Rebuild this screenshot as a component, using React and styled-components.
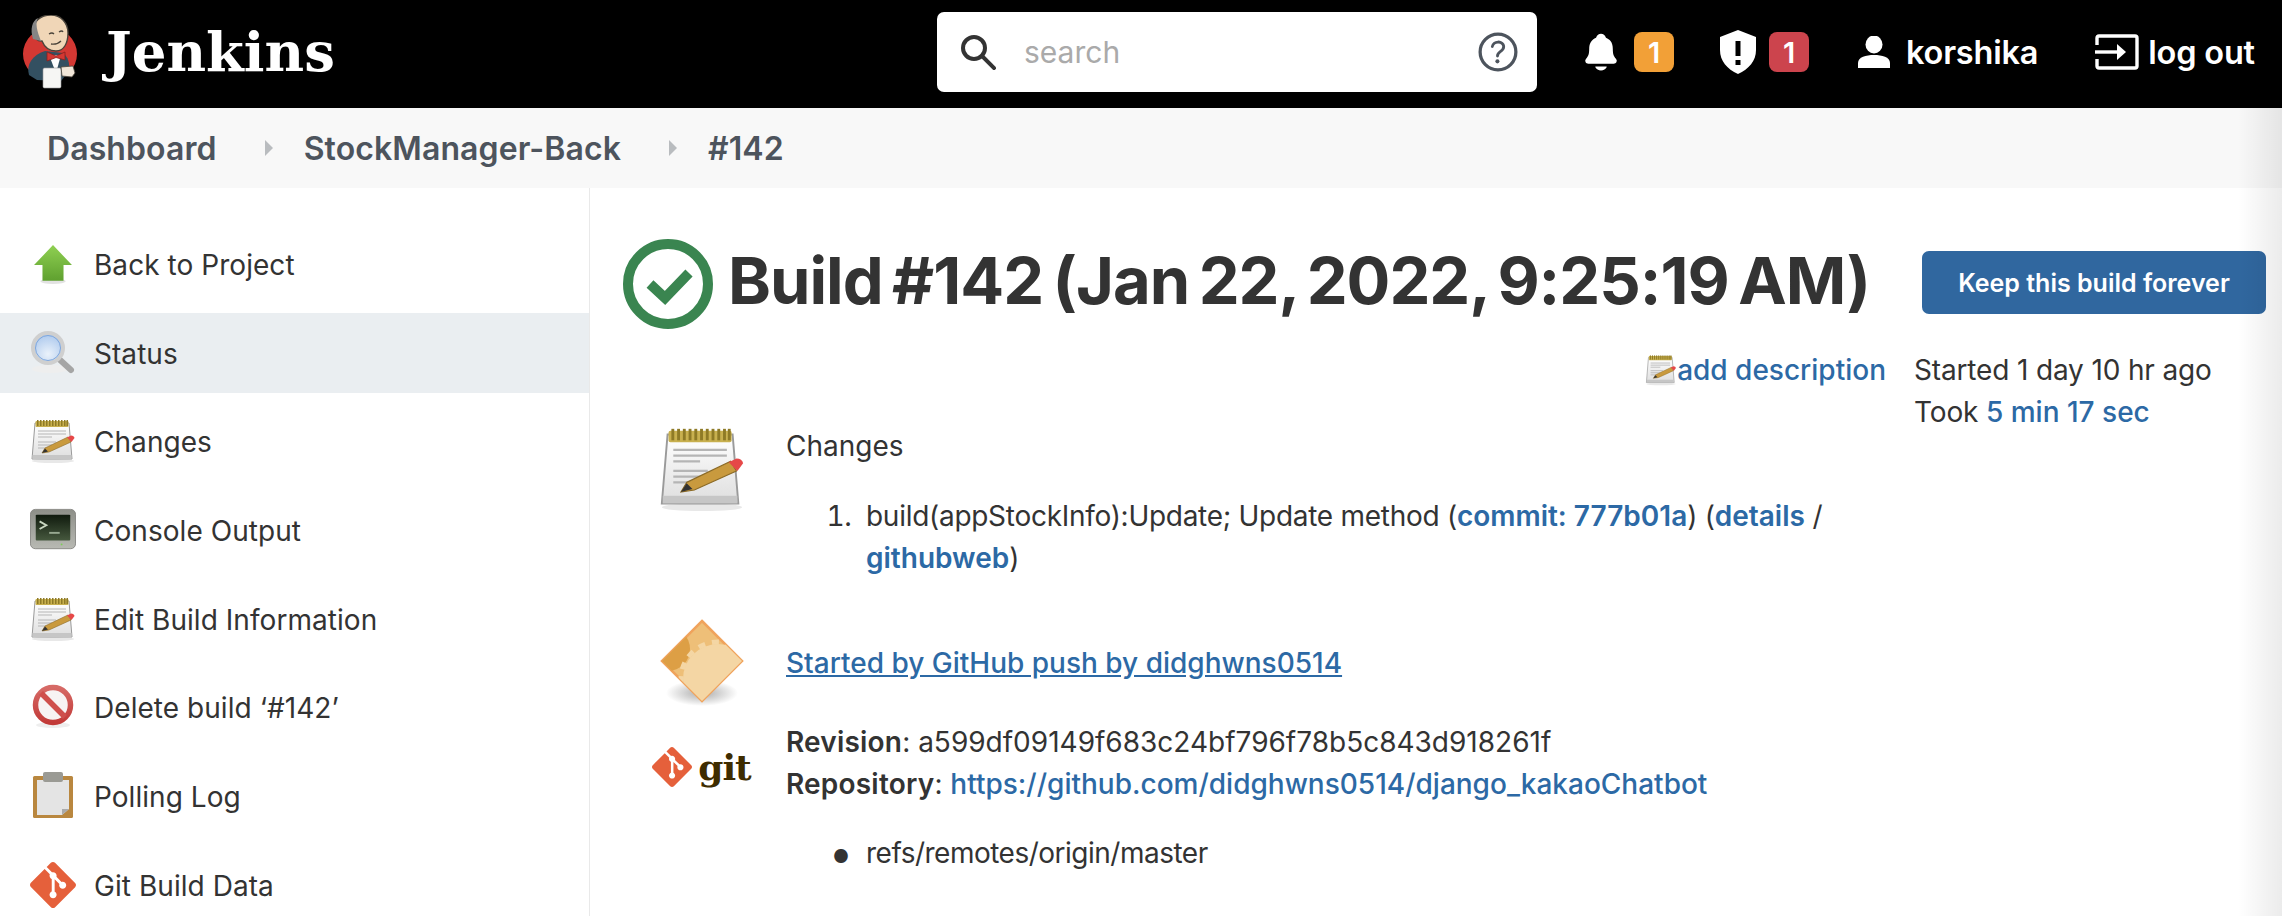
import React from 'react';
import styled, { createGlobalStyle } from 'styled-components';
import { SiGit } from 'react-icons/si';
import { IoNotifications, IoHelpCircleOutline } from 'react-icons/io5';

const GlobalStyle = createGlobalStyle`
  html, body {
    margin: 0;
    padding: 0;
    height: 100%;
    overflow: hidden;
    background: #fff;
  }
  body {
    font-family: Inter, "Liberation Sans", sans-serif;
    color: #333;
    font-size: 28px;
  }
`;

const Page = styled.div`
  position: relative;
  width: 2282px;
  height: 916px;
  overflow: hidden;
  &::after {
    content: '';
    position: absolute;
    top: 108px;
    right: 0;
    bottom: 0;
    width: 44px;
    pointer-events: none;
    background: linear-gradient(to right, rgba(0,0,0,0), rgba(0,0,0,0.08));
  }
`;

const Header = styled.header`
  display: flex;
  align-items: center;
  height: 108px;
  box-sizing: border-box;
  padding-bottom: 4px;
  background: #000;
  color: #fff;
`;

const Brand = styled.div`
  display: flex;
  align-items: center;
  width: 937px;
  padding-left: 23px;
  box-sizing: border-box;
`;

const Wordmark = styled.span`
  margin-left: 29px;
  font-family: "DejaVu Serif", serif;
  font-weight: 700;
  font-size: 54.5px;
  line-height: 1;
`;

const Search = styled.div`
  display: flex;
  align-items: center;
  width: 600px;
  height: 80px;
  padding: 0 13px 0 23px;
  box-sizing: border-box;
  background: #fff;
  border-radius: 7px;
`;

const SearchText = styled.span`
  flex: 1;
  margin-left: 28px;
  font-size: 30px;
  color: #aaa;
`;

const HeaderActions = styled.div`
  display: flex;
  align-items: center;
  margin-left: 43px;
`;

const HeaderItem = styled.span`
  display: flex;
  align-items: center;
  gap: ${p => p.$gap || 15}px;
  margin-left: ${p => p.$offset || 0}px;
  font-size: 32.5px;
  font-weight: 600;
  letter-spacing: -0.2px;
`;

const Badge = styled.span`
  display: flex;
  align-items: center;
  justify-content: center;
  width: 40px;
  height: 40px;
  border-radius: 8px;
  font-size: 29px;
  font-weight: 600;
  color: #fff;
  background: ${p => p.$color};
`;

const Breadcrumbs = styled.nav`
  display: flex;
  align-items: center;
  height: 80px;
  padding-left: 47px;
  background: #f8f8f8;
  color: #4d545d;
  font-size: 32px;
  font-weight: 600;
  letter-spacing: 0.1px;
`;

const Chevron = styled.span`
  width: 0;
  height: 0;
  margin: 0 31px 0 48px;
  border-left: 8px solid #b9bcbf;
  border-top: 8px solid transparent;
  border-bottom: 8px solid transparent;
`;

const Body = styled.div`
  display: flex;
  height: 728px;
`;

const Sidebar = styled.aside`
  flex: none;
  width: 590px;
  box-sizing: border-box;
  padding-top: 36px;
  border-right: 1px solid #e9e9e9;
`;

const TaskRow = styled.div`
  display: flex;
  align-items: center;
  height: 80px;
  margin-bottom: 8.7px;
  padding-left: 30px;
  background: ${p => (p.$active ? '#eaeef1' : 'transparent')};
`;

const TaskIcon = styled.span`
  display: flex;
  justify-content: center;
  width: 46px;
  margin-right: 18px;
`;

const TaskLabel = styled.span`
  margin-top: 2px;
  letter-spacing: 0.05px;
`;

const Main = styled.main`
  flex: 1;
  padding: 0 16px 0 33px;
  min-width: 0;
`;

const TitleRow = styled.div`
  display: flex;
  align-items: center;
  margin-top: 48px;
`;

const Title = styled.h1`
  flex: 1;
  margin: 0 0 5px 15px;
  font-size: 65px;
  font-weight: 700;
  line-height: 90px;
  letter-spacing: -1px;
  word-spacing: -5px;
  color: #333;
  white-space: nowrap;
`;

const KeepButton = styled.button`
  width: 344px;
  height: 63px;
  margin-bottom: 2px;
  border: 0;
  border-radius: 7px;
  background: #30679f;
  color: #fff;
  font-family: inherit;
  font-size: 25px;
  font-weight: 600;
`;

const Columns = styled.div`
  display: flex;
  margin-top: 18px;
`;

const Details = styled.div`
  flex: 1;
  min-width: 0;
`;

const DescriptionRow = styled.div`
  display: flex;
  justify-content: flex-end;
  align-items: center;
  height: 42px;
  padding-right: 28px;
`;

const Link = styled.a`
  color: #2c69a5;
  font-weight: ${p => p.$weight || 500};
  letter-spacing: 0;
  text-decoration: ${p => (p.$underline ? 'underline' : 'none')};
`;

const BuildRow = styled.div`
  display: flex;
  margin-top: ${p => p.$top || 0}px;
  line-height: 42px;
`;

const RowIcon = styled.span`
  flex: none;
  display: flex;
  align-items: flex-start;
  justify-content: center;
  width: 125px;
  margin-left: 16px;
  margin-right: 22px;
  padding-top: ${p => p.$top || 0}px;
`;

const RowContent = styled.div`
  flex: 1;
  padding-right: 30px;
  padding-top: ${p => p.$top || 0}px;
`;

const NumberedList = styled.ol`
  margin: 28px 0 0;
  padding-left: 80px;
  letter-spacing: -0.28px;
  li::marker {
    content: '1.\\00a0\\00a0';
  }
`;

const Bullets = styled.ul`
  margin: 27px 0 0;
  padding-left: 80px;
  letter-spacing: -0.5px;
  li::marker {
    content: '●\\00a0\\00a0\\00a0\\00a0';
    font-size: 18px;
  }
`;

const Caption = styled.div`
  flex: none;
  width: 352px;
  line-height: 42px;
  letter-spacing: -0.15px;
`;

const Strong = styled.b`
  font-weight: 600;
  letter-spacing: 0.2px;
`;

const GitWord = styled.span`
  font-family: "DejaVu Serif", serif;
  font-weight: 700;
  font-size: 36px;
  line-height: 40px;
  color: #3e2c00;
  margin-left: 6px;
  letter-spacing: -1px;
`;

const GitLogoWrap = styled.span`
  display: flex;
  align-items: center;
`;

const Mascot = () => (
  <svg width="54" height="74" viewBox="0 0 54 74">
    <ellipse cx="27" cy="39" rx="27" ry="26" fill="#d33833" />
    <path d="M6 60 C3 50 9 40 22 36 L40 38 C45 42 47 48 46 56 L38 66 L14 65 Z" fill="#335061" />
    <path d="M26 40 L38 40 L33 58 Z" fill="#fff" />
    <path d="M24 37 L33 41 L42 37 L42 45 L33 42.5 L24 46 Z" fill="#d33833" stroke="#8a1f1c" strokeWidth="0.8" />
    <path d="M11 18 C9 6 18 0 28 0 C38 0 45 8 45 18 C45 28 41 36 33 36 C25 36 21 31 19 26 C14 27 12 22 11 18 Z" fill="#f0d6b7" stroke="#49433a" strokeWidth="1.4" />
    <path d="M10 24 C7 14 9 6 15 3 C12 8 14 16 18 26 Z" fill="#858585" />
    <path d="M26 19 q3 -2 5 0 M36 17 q3 -2 4 0" stroke="#49433a" strokeWidth="1.3" fill="none" />
    <path d="M28 29 q6 1 10 -3" stroke="#49433a" strokeWidth="1.3" fill="none" />
    <rect x="20" y="53" width="18" height="20" rx="1.5" fill="#f6f6f4" stroke="#999" strokeWidth="0.6" />
    <path d="M38 52 L50 51 L52 58 L49 62 L39 61 Z" fill="#f0e6d8" stroke="#49433a" strokeWidth="0.8" />
  </svg>
);

const SearchGlyph = () => (
  <svg width="36" height="36" viewBox="0 0 36 36" fill="none" stroke="#333" strokeWidth="4">
    <circle cx="14" cy="14" r="11" />
    <path d="M22 22 L34 34" strokeLinecap="square" />
  </svg>
);

const ShieldGlyph = () => (
  <svg width="36" height="44" viewBox="0 0 36 44">
    <path fillRule="evenodd" fill="#fff" d="M18 0 L36 7 V20 C36 31 29 39 18 44 C7 39 0 31 0 20 V7 Z M15.5 11 V26 H20.5 V11 Z M15.5 30 V35 H20.5 V30 Z" />
  </svg>
);

const PersonGlyph = () => (
  <svg width="32" height="32" viewBox="0 0 32 32" fill="#fff">
    <ellipse cx="16" cy="8.5" rx="8.5" ry="9" />
    <path d="M0 32 V27 C0 21 8 19 16 19 C24 19 32 21 32 27 V32 Z" />
  </svg>
);

const LogoutGlyph = () => (
  <svg width="44" height="36" viewBox="0 0 44 36" fill="none" stroke="#fff" strokeWidth="3.4">
    <path d="M2 11 V4 Q2 2 4 2 H40 Q42 2 42 4 V32 Q42 34 40 34 H4 Q2 34 2 32 V25" />
    <path d="M0 18 H24" />
    <path d="M22 10 L31 18 L22 26 Z" fill="#fff" stroke="none" />
  </svg>
);

const StatusGlyph = () => (
  <svg width="90" height="90" viewBox="0 0 90 90">
    <circle cx="45" cy="45" r="40" fill="none" stroke="#3a8550" strokeWidth="10" />
    <path d="M27 45 L42 59 L66 34" fill="none" stroke="#3a8550" strokeWidth="10" />
  </svg>
);

const ArrowUpGlyph = () => (
  <svg width="40" height="40" viewBox="0 0 38 38">
    <defs>
      <linearGradient id="up" x1="0" y1="0" x2="0" y2="1">
        <stop offset="0" stopColor="#8fd052" />
        <stop offset="1" stopColor="#5fa02f" />
      </linearGradient>
    </defs>
    <ellipse cx="19" cy="35.5" rx="12" ry="2.5" fill="#e2e2e2" />
    <path d="M19 1 L37 20 H29 V35 H9 V20 H1 Z" fill="url(#up)" />
  </svg>
);

const MagnifierGlyph = () => (
  <svg width="46" height="46" viewBox="0 0 46 46">
    <defs>
      <radialGradient id="lens" cx="0.5" cy="0.7" r="0.7">
        <stop offset="0" stopColor="#eaf2fb" />
        <stop offset="1" stopColor="#a9c6ec" />
      </radialGradient>
    </defs>
    <ellipse cx="20" cy="39" rx="18" ry="4" fill="#eee" />
    <path d="M29 29 L41 40" stroke="#a5a5a5" strokeWidth="6" strokeLinecap="round" />
    <circle cx="18" cy="18" r="15" fill="url(#lens)" stroke="#cfcfcf" strokeWidth="4" />
    <circle cx="18" cy="18" r="12.5" fill="none" stroke="#7ea6dc" strokeWidth="1" />
  </svg>
);

const NotepadGlyph = ({ size = 46 }) => (
  <svg width={size} height={size} viewBox="0 0 46 46">
    <defs>
      <linearGradient id="page" x1="0" y1="0" x2="0" y2="1">
        <stop offset="0" stopColor="#fff" />
        <stop offset="1" stopColor="#dedede" />
      </linearGradient>
    </defs>
    <ellipse cx="23" cy="43" rx="21" ry="2" fill="#e8e8e8" />
    <path d="M5 5 H39 L42 41 H2 Z" fill="url(#page)" stroke="#9a9a9a" strokeWidth="1" />
    <rect x="2.5" y="37" width="39" height="4" fill="#c6c6c6" />
    <rect x="5.5" y="3" width="33" height="6" rx="1" fill="#c8b04f" />
    {[7, 10, 13, 16, 19, 22, 25, 28, 31, 34, 36.5].map(x => (
      <rect key={x} x={x} y="2" width="1.5" height="6" fill="#8e7a26" />
    ))}
    <path d="M8 13 H36 M8 16 H36 M8 19 H22 M8 24 H26 M8 27 H22 M8 30 H20" stroke="#b5b5b5" strokeWidth="1.2" />
    <path d="M15 30 L38 19 L41 24 L19 34 L12 35 Z" fill="#c99a3e" stroke="#8b6a26" strokeWidth="0.6" />
    <path d="M37 19.5 L41 17.5 Q44 17.5 44.5 20 L41.5 24 Z" fill="#e64848" />
    <path d="M12 35 L15 30.5 L18 33.5 Z" fill="#333" />
  </svg>
);

const TerminalGlyph = () => (
  <svg width="48" height="44" viewBox="0 0 48 44">
    <defs>
      <linearGradient id="bezel" x1="0" y1="0" x2="0" y2="1">
        <stop offset="0" stopColor="#8d8f88" />
        <stop offset="1" stopColor="#b8b9b3" />
      </linearGradient>
      <linearGradient id="screen" x1="0" y1="0" x2="0" y2="1">
        <stop offset="0" stopColor="#0f1a0d" />
        <stop offset="1" stopColor="#46583e" />
      </linearGradient>
    </defs>
    <rect x="0.5" y="0.5" width="47" height="41" rx="5" fill="url(#bezel)" stroke="#8a8a86" />
    <rect x="6" y="6" width="36" height="27" rx="1" fill="url(#screen)" />
    <path d="M10 13 L17 17 L10 21" fill="none" stroke="#c8d6c0" strokeWidth="2" />
    <path d="M20 25 H31" stroke="#97a890" strokeWidth="2" />
    <circle cx="33" cy="37" r="1" fill="#7dcf56" />
  </svg>
);

const NoEntryGlyph = () => (
  <svg width="44" height="46" viewBox="0 0 44 46">
    <defs>
      <linearGradient id="noentry" x1="0" y1="0" x2="0" y2="1">
        <stop offset="0" stopColor="#d66a66" />
        <stop offset="1" stopColor="#c23a38" />
      </linearGradient>
    </defs>
    <ellipse cx="22" cy="41" rx="17" ry="3" fill="#eee" />
    <circle cx="22" cy="21" r="17.5" fill="#f7f3f3" stroke="url(#noentry)" strokeWidth="5.5" />
    <path d="M10 9 L34 33" stroke="#cf4f4c" strokeWidth="5.5" />
  </svg>
);

const ClipboardGlyph = () => (
  <svg width="42" height="48" viewBox="0 0 42 48">
    <rect x="1" y="4" width="40" height="42" rx="1.5" fill="#b9873f" />
    <path d="M5 8 H37 V37 L30 43 H5 Z" fill="#e4e4e4" />
    <path d="M30 43 L37 37 H30 Z" fill="#aaa" />
    <rect x="11" y="0" width="20" height="10" rx="2" fill="#9a9a94" />
  </svg>
);

const GearDiamondGlyph = () => (
  <svg width="84" height="90" viewBox="0 0 84 90">
    <defs>
      <radialGradient id="shade">
        <stop offset="0" stopColor="#aaa" />
        <stop offset="1" stopColor="#fff" />
      </radialGradient>
      <clipPath id="diamond">
        <path d="M42 2 L82 42 L42 82 L2 42 Z" />
      </clipPath>
    </defs>
    <ellipse cx="42" cy="74" rx="36" ry="13" fill="url(#shade)" />
    <path d="M42 2 L82 42 L42 82 L2 42 Z" fill="#eebf78" stroke="#f0a35c" strokeWidth="2.5" />
    <g clipPath="url(#diamond)">
      <circle cx="8" cy="30" r="22" fill="#dd9f45" />
      <circle cx="58" cy="60" r="35" fill="#f4d6a4" />
      <circle cx="58" cy="60" r="37" fill="none" stroke="#f4d6a4" strokeWidth="5" strokeDasharray="7 7" />
    </g>
  </svg>
);

const GitDiamond = ({ size }) => <SiGit size={size} color="#e5603b" />;

const tasks = [
  ['Back to Project', <ArrowUpGlyph />],
  ['Status', <MagnifierGlyph />, true],
  ['Changes', <NotepadGlyph />],
  ['Console Output', <TerminalGlyph />],
  ['Edit Build Information', <NotepadGlyph />],
  ['Delete build ‘#142’', <NoEntryGlyph />],
  ['Polling Log', <ClipboardGlyph />],
  ['Git Build Data', <GitDiamond size={46} />],
];

const App = () => (
  <Page>
    <GlobalStyle />
    <Header>
      <Brand>
        <Mascot />
        <Wordmark>Jenkins</Wordmark>
      </Brand>
      <Search>
        <SearchGlyph />
        <SearchText>search</SearchText>
        <IoHelpCircleOutline size={52} color="#4d545d" />
      </Search>
      <HeaderActions>
        <HeaderItem $gap={12}>
          <IoNotifications size={42} />
          <Badge $color="#f2a037">1</Badge>
        </HeaderItem>
        <HeaderItem $offset={46} $gap={13}>
          <ShieldGlyph />
          <Badge $color="#cc444d">1</Badge>
        </HeaderItem>
        <HeaderItem $offset={49} $gap={16}>
          <PersonGlyph />
          korshika
        </HeaderItem>
        <HeaderItem $offset={57} $gap={9}>
          <LogoutGlyph />
          log out
        </HeaderItem>
      </HeaderActions>
    </Header>
    <Breadcrumbs>
      Dashboard
      <Chevron />
      StockManager-Back
      <Chevron />
      #142
    </Breadcrumbs>
    <Body>
      <Sidebar>
        {tasks.map(([label, icon, active]) => (
          <TaskRow key={label} $active={active}>
            <TaskIcon>{icon}</TaskIcon>
            <TaskLabel>{label}</TaskLabel>
          </TaskRow>
        ))}
      </Sidebar>
      <Main>
        <TitleRow>
          <StatusGlyph />
          <Title>Build #142 (Jan 22, 2022, 9:25:19 AM)</Title>
          <KeepButton>Keep this build forever</KeepButton>
        </TitleRow>
        <Columns>
          <Details>
            <DescriptionRow>
              <NotepadGlyph size={32} />
              <Link>add description</Link>
            </DescriptionRow>
            <BuildRow $top={34}>
              <RowIcon><NotepadGlyph size={88} /></RowIcon>
              <RowContent>
                Changes
                <NumberedList>
                  <li>
                    build(appStockInfo):Update; Update method (<Link $weight={600}>commit: 777b01a</Link>) (<Link $weight={600}>details</Link> / <Link $weight={600}>githubweb</Link>)
                  </li>
                </NumberedList>
              </RowContent>
            </BuildRow>
            <BuildRow $top={40}>
              <RowIcon><GearDiamondGlyph /></RowIcon>
              <RowContent $top={23}>
                <Link $underline>Started by GitHub push by didghwns0514</Link>
              </RowContent>
            </BuildRow>
            <BuildRow $top={12}>
              <RowIcon $top={26}>
                <GitLogoWrap>
                  <GitDiamond size={40} />
                  <GitWord>git</GitWord>
                </GitLogoWrap>
              </RowIcon>
              <RowContent>
                <div><Strong>Revision</Strong>: a599df09149f683c24bf796f78b5c843d918261f</div>
                <div><Strong>Repository</Strong>: <Link>https://github.com/didghwns0514/django_kakaoChatbot</Link></div>
                <Bullets>
                  <li>refs/remotes/origin/master</li>
                </Bullets>
              </RowContent>
            </BuildRow>
          </Details>
          <Caption>
            <div>Started 1 day 10 hr ago</div>
            <div>Took <Link>5 min 17 sec</Link></div>
          </Caption>
        </Columns>
      </Main>
    </Body>
  </Page>
);

export default App;
